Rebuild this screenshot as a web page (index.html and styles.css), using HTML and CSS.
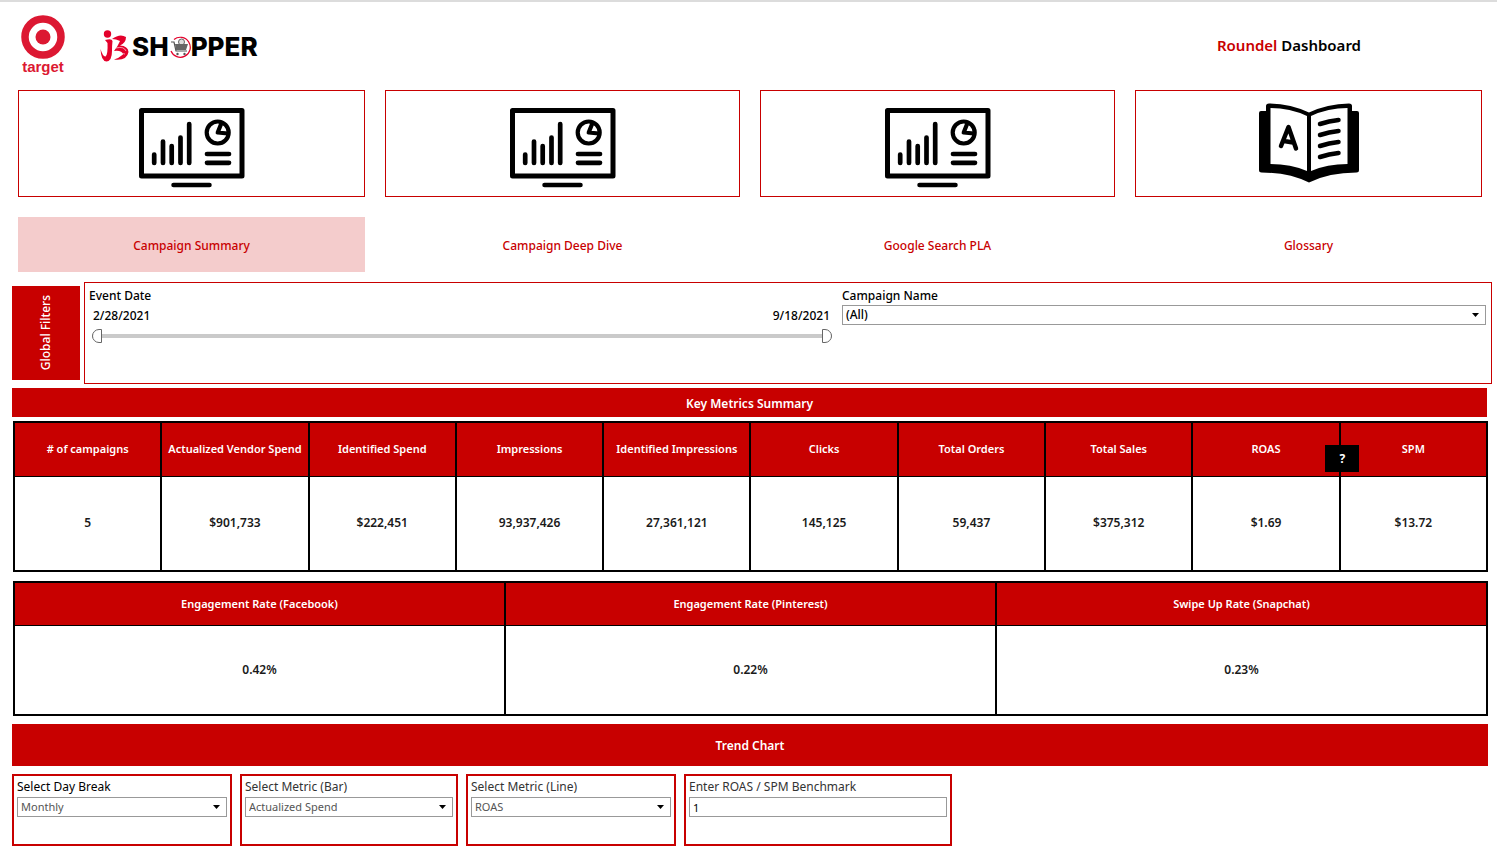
FILE: index.html
```html
<!DOCTYPE html>
<html lang="en">
<head>
  <meta charset="UTF-8" />
  <meta name="viewport" content="width=device-width, initial-scale=1.0"/>
  <title>Roundel Dashboard</title>
  <link rel="stylesheet" href="styles.css">
</head>
<body>
  <svg class="defs" aria-hidden="true">
    <symbol id="icon-board" viewBox="0 0 106 80">
      <g fill="none" stroke="#000" stroke-linecap="round" stroke-linejoin="round">
        <rect x="2.5" y="2.5" width="100.500" height="65.500" stroke-width="5"/>
        <path d="M34.500 77h36" stroke-width="4.500"/>
        <path d="M15.200 46.500v8.500M24 33.500v21.500M32.700 38v17M41.500 29.500v25.500M50.200 16v39" stroke-width="4.700"/>
        <path d="M68 46h22M68 54.800h22" stroke-width="4.700"/>
        <circle cx="78.700" cy="24.500" r="11" stroke-width="4.200"/>
        <path d="M82.500 15L78.700 24.500l10 1" stroke-width="4.200"/>
      </g>
    </symbol>
    <symbol id="icon-book" viewBox="0 0 100 80">
      <path d="M2 8h5V3q0-2.500 3-2.500Q32 1 50 9.500Q68 1 90 .500q3 0 3 2.500v5h5q2 0 2 2v57q0 2.500-2.500 2.500Q70 69.500 50 79.500Q30 69.500 2.500 69.500Q0 69.500 0 67V10q0-2 2-2z"/>
      <path fill="#fff" d="M11.500 5Q31 5 48 13v55Q32 61 11.500 61zM88.500 5Q69 5 52 13v55Q68 61 88.500 61z"/>
      <path d="M22 43l7.500-19L37 45.500M25 38l9 1.500" fill="none" stroke="#000" stroke-width="4.500" stroke-linecap="round" stroke-linejoin="round"/>
      <path d="M61 21q9-3 18.500-4M61 32q9-3 18.500-4M61 43q9-3 18.500-4M61 54q9-3 18.500-4" fill="none" stroke="#000" stroke-width="4.500" stroke-linecap="round"/>
    </symbol>
  </svg>

  <header class="header">
    <div class="target">
      <svg class="bullseye" viewBox="0 0 44 44" aria-hidden="true">
        <circle cx="22" cy="22" r="18" fill="none" stroke="#dc1832" stroke-width="7.500"/>
        <circle cx="22" cy="22" r="7.500" fill="#dc1832"/>
      </svg>
      <span>target</span>
    </div>
    <div class="shopper">
      <svg class="jb" viewBox="0 0 29 33" aria-hidden="true">
        <circle cx="7.500" cy="4" r="3.700" fill="#e4002b"/>
        <path d="M5 10Q12 8 12.500 11Q12 15 12 21Q12 31 6.500 31.500Q1 31 .500 19Q3 27 5.500 26.500Q8 25 7.500 13zM12 9Q20 3 26 7Q26 13 20 15.500Q28 16 28.500 22Q27 31 14 29.500Q19 28 23 24.500Q22 20 14 21Q18 16 20 11Q16 9 12 9z" fill="#e4002b"/>
        <path d="M16 18q8-2 10 3M16 25q5-3 9-1" fill="none" stroke="#fff" stroke-width=".600"/>
      </svg>
      <span class="word">SH</span>
      <svg class="cart" viewBox="0 0 22 22" aria-hidden="true">
        <path d="M5 3.500A10 10 0 1 1 2 15" fill="none" stroke="#e4002b" stroke-width="1.200"/>
        <circle cx="12.500" cy="6" r="3" fill="#ddd" stroke="#666"/>
        <path d="M2 6h3l2 9h11" fill="none" stroke="#555" stroke-width="1.200"/>
        <path d="M6 8h13l-2 6H7z" fill="#666"/>
        <circle cx="8.500" cy="18" r="1.200" fill="#555"/>
        <circle cx="15.500" cy="18" r="1.200" fill="#555"/>
      </svg>
      <span class="word">PPER</span>
    </div>
    <h1 class="title"><span>Roundel</span> Dashboard</h1>
  </header>

  <nav class="tabs">
    <a href="#summary" class="tab active">
      <span class="tile"><svg class="board"><use href="#icon-board"/></svg></span>
      <span class="name">Campaign Summary</span>
    </a>
    <a href="#deep-dive" class="tab">
      <span class="tile"><svg class="board"><use href="#icon-board"/></svg></span>
      <span class="name">Campaign Deep Dive</span>
    </a>
    <a href="#pla" class="tab">
      <span class="tile"><svg class="board"><use href="#icon-board"/></svg></span>
      <span class="name">Google Search PLA</span>
    </a>
    <a href="#glossary" class="tab">
      <span class="tile"><svg class="book"><use href="#icon-book"/></svg></span>
      <span class="name">Glossary</span>
    </a>
  </nav>

  <section class="filters">
    <div class="side-label"><span>Global Filters</span></div>
    <div class="filter-box">
      <div class="filter">
        <div class="label">Event Date</div>
        <div class="dates"><label for="dateFrom">2/28/2021</label><label for="dateTo">9/18/2021</label></div>
        <div class="range">
          <input type="range" class="from" id="dateFrom" min="0" max="202" value="0">
          <input type="range" class="to" id="dateTo" min="0" max="202" value="202">
        </div>
      </div>
      <div class="filter campaign">
        <label class="label" for="campaign">Campaign Name</label>
        <select id="campaign"><option>(All)</option></select>
      </div>
    </div>
  </section>

  <main class="main" id="summary">
    <h2 class="bar">Key Metrics Summary</h2>
    <div class="metrics-wrap">
      <table class="metrics">
        <thead>
          <tr>
            <th># of campaigns</th>
            <th>Actualized Vendor Spend</th>
            <th>Identified Spend</th>
            <th>Impressions</th>
            <th>Identified Impressions</th>
            <th>Clicks</th>
            <th>Total Orders</th>
            <th>Total Sales</th>
            <th>ROAS</th>
            <th>SPM</th>
          </tr>
        </thead>
        <tbody>
          <tr>
            <td>5</td>
            <td>$901,733</td>
            <td>$222,451</td>
            <td>93,937,426</td>
            <td>27,361,121</td>
            <td>145,125</td>
            <td>59,437</td>
            <td>$375,312</td>
            <td>$1.69</td>
            <td>$13.72</td>
          </tr>
        </tbody>
      </table>
      <button type="button" class="help">?</button>
    </div>

    <table class="metrics rates">
      <thead>
        <tr>
          <th>Engagement Rate (Facebook)</th>
          <th>Engagement Rate (Pinterest)</th>
          <th>Swipe Up Rate (Snapchat)</th>
        </tr>
      </thead>
      <tbody>
        <tr>
          <td>0.42%</td>
          <td>0.22%</td>
          <td>0.23%</td>
        </tr>
      </tbody>
    </table>

    <h2 class="bar tall">Trend Chart</h2>
    <form class="params">
      <div class="param first">
        <label for="dayBreak">Select Day Break</label>
        <select id="dayBreak"><option>Monthly</option></select>
      </div>
      <div class="param">
        <label for="metricBar">Select Metric (Bar)</label>
        <select id="metricBar"><option>Actualized Spend</option></select>
      </div>
      <div class="param">
        <label for="metricLine">Select Metric (Line)</label>
        <select id="metricLine"><option>ROAS</option></select>
      </div>
      <div class="param">
        <label for="benchmark">Enter ROAS / SPM Benchmark</label>
        <input type="text" id="benchmark" value="1">
      </div>
    </form>
  </main>
</body>
</html>
```
FILE: styles.css
```css
* { box-sizing: border-box; }
body { margin: 0; padding-bottom: 5px; border-top: 2px solid #dcdcdc; background: #fff; color: #000; font-family: 'Noto Sans', 'Open Sans', sans-serif; font-size: 12px; line-height: 16px; }
.defs { position: absolute; width: 0; height: 0; }

.header { display: flex; align-items: center; height: 88px; padding: 0 136px 2px 20px; }
.target { display: flex; flex-direction: column; align-items: center; width: 46px; color: #dc1832; font: bold 15px/16px 'Liberation Sans', sans-serif; }
.bullseye { width: 44px; height: 44px; }
.shopper { display: flex; align-items: center; margin: 3px 0 0 34px; }
.jb { width: 29px; height: 33px; margin-right: 3px; }
.word { font: 800 26px/28px Inter, sans-serif; }
.cart { width: 22px; height: 22px; }
.title { margin: 0 0 0 auto; font-size: 15px; line-height: 20px; font-weight: 600; }
.title span { color: #c80000; }

.tabs { display: grid; grid-template-columns: 347fr 355fr 355fr 347fr; gap: 20px; padding: 0 15px 0 18px; }
.tab { display: flex; flex-direction: column; gap: 20px; color: #c80000; font-weight: 500; text-decoration: none; }
.tile { display: flex; justify-content: center; height: 107px; padding-top: 17px; border: 1px solid #c80000; }
.tile .board { width: 106px; height: 80px; }
.tile .book { width: 100px; height: 80px; margin-top: -5px; }
.name { padding: 21px 0 18px; text-align: center; }
.active .name { background: #f4cccc; }

.filters { display: flex; align-items: center; gap: 4px; padding: 10px 5px 4px 12px; }
.side-label { display: flex; align-items: center; justify-content: center; width: 68px; height: 94px; background: #c80000; color: #fff; font-weight: 500; }
.side-label span { writing-mode: vertical-rl; transform: rotate(180deg); }
.filter-box { display: grid; grid-template-columns: 753fr 653fr; flex: 1; height: 102px; padding: 5px 0 0; border: 1px solid #c80000; }
.filter { padding: 0 5px 0 4px; font-weight: 500; }
.label { display: block; }
.dates { display: flex; justify-content: space-between; padding: 4px 3px 0 4px; }
.range { display: grid; align-items: center; height: 14px; margin: 5px 1px 0 3px; background: linear-gradient(#cacaca, #cacaca) center / 100% 4px no-repeat; }
.range input { grid-area: 1 / 1; width: 100%; height: 14px; margin: 0; background: none; appearance: none; pointer-events: none; }
.range input::-webkit-slider-thumb { appearance: none; width: 10px; height: 14px; border: 1px solid #666; background: #fff; pointer-events: auto; }
.range .from::-webkit-slider-thumb { border-radius: 7px 0 0 7px; }
.range .to::-webkit-slider-thumb { border-radius: 0 7px 7px 0; }

select, input[type='text'] { display: block; width: 100%; height: 20px; padding: 0 3px; border: 1px solid #999; border-radius: 0; background: #fff; font: inherit; font-size: 11px; line-height: 16px; color: #000; }
select { appearance: none; background: #fff url("data:image/svg+xml,%3Csvg xmlns='http://www.w3.org/2000/svg' width='7' height='4'%3E%3Cpath d='M0 0h7L3.500 4z'/%3E%3C/svg%3E") right 6px center no-repeat; }
.campaign select { margin-top: 1px; font-size: 12px; font-weight: 500; }

.main { padding: 0 9px 0 12px; }
.bar { margin: 0 1px 4px 0; padding: 8px 0 5px; background: #c80000; color: #fff; font-size: 12px; line-height: 16px; font-weight: 600; text-align: center; }
.bar.tall { margin: 0 0 8px; padding: 14px 0 12px; }
.metrics-wrap { position: relative; margin-bottom: 9px; }
.metrics { width: calc(100% - 1px); margin-left: 1px; border-collapse: collapse; table-layout: fixed; text-align: center; }
.metrics th, .metrics td { padding: 0; border: 2px solid #000; }
.metrics th { height: 54px; border-bottom-width: 1px; background: #c80000; color: #fff; font-size: 11px; font-weight: 600; }
.metrics td { height: 95px; border-top-width: 1px; color: #1a1a1a; font-weight: 600; }
.metrics.rates { margin-bottom: 8px; }
.rates th { height: 43px; }
.rates td { height: 90px; }
/* sits on the line between ROAS and SPM */
.help { position: absolute; top: 24px; right: 10%; width: 34px; height: 27px; margin-right: -19px; padding: 0; border: 0; background: #000; color: #fff; font: inherit; font-weight: 700; }

.params { display: grid; grid-template-columns: 220fr 218fr 210fr 268fr 528fr; gap: 8px; }
.param { height: 72px; padding: 2px 3px; border: 2px solid #c80000; color: #333; }
.param.first { color: #000; }
.param label { display: block; padding-top: 1px; margin-bottom: 2px; }
.param select { color: #555; }
```
